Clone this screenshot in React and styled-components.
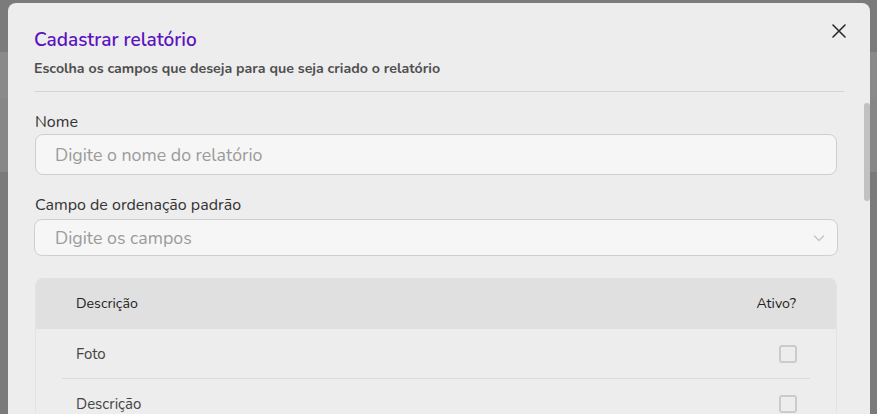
import React from "react";
import styled, { createGlobalStyle } from "styled-components";

const GlobalStyle = createGlobalStyle`
  html, body {
    margin: 0;
    padding: 0;
    overflow: hidden;
    font-family: "Nunito", "Open Sans", sans-serif;
  }
`;

const Page = styled.div`
  position: relative;
  width: 877px;
  height: 414px;
  overflow: hidden;
  display: flex;
  flex-direction: column;
`;

const Band = styled.div`
  height: ${(p) => p.$h}px;
  flex: ${(p) => (p.$grow ? 1 : "none")};
  background: ${(p) => p.$bg};
`;

const Modal = styled.div`
  position: absolute;
  top: 3px;
  left: 8px;
  width: 862px;
  height: 430px;
  background: #ededed;
  border-radius: 8px;
  display: flex;
  flex-direction: column;
`;

const Header = styled.div`
  position: relative;
  margin: 0 26px;
  padding: 24px 0 13px;
  border-bottom: 1px solid #d5d5d5;
`;

const Title = styled.h2`
  margin: 0;
  font-size: 19px;
  line-height: 26px;
  font-weight: 600;
  color: #5c12c0;
`;

const Subtitle = styled.p`
  margin: 7px 0 0;
  font-size: 14.2px;
  line-height: 18px;
  font-weight: 700;
  color: #4f4f4f;
`;

const Close = styled.button`
  position: absolute;
  top: 17px;
  right: -6px;
  width: 22px;
  height: 22px;
  padding: 0;
  border: 0;
  background: transparent;
  display: flex;
  align-items: center;
  justify-content: center;
  cursor: pointer;
`;

const BodyWrap = styled.div`
  position: relative;
  flex: 1;
  overflow: hidden;
`;

const ScrollThumb = styled.div`
  position: absolute;
  top: 11px;
  right: 0;
  width: 6px;
  height: 98px;
  border-radius: 3px;
  background: #c1c1c1;
`;

const Body = styled.div`
  padding: 19px 33px 0 26px;
`;

const Field = styled.div`
  display: flex;
  flex-direction: column;
  gap: ${(p) => p.$gap}px;
  margin-bottom: ${(p) => p.$mb}px;
`;

const Label = styled.label`
  padding-left: 1px;
  font-size: 16px;
  line-height: 22px;
  color: #333;
`;

const Input = styled.input`
  box-sizing: border-box;
  height: 41px;
  margin-left: 1px;
  padding: 0 19px;
  border: 1px solid #cfcfcf;
  border-radius: 8px;
  background: #f6f6f6;
  font-family: inherit;
  font-size: 17.8px;
  color: #333;
  outline: none;

  &::placeholder {
    color: #9b9b9b;
  }
`;

const SelectBox = styled.div`
  box-sizing: border-box;
  height: 37px;
  margin-right: -1px;
  padding: 0 12px 0 20px;
  border: 1px solid #cfcfcf;
  border-radius: 8px;
  background: #f6f6f6;
  display: flex;
  align-items: center;
  justify-content: space-between;
  font-size: 17.8px;
  color: #9b9b9b;
`;

const Table = styled.div`
  margin-left: 1px;
  border: 1px solid #e3e3e3;
  border-top: 0;
  border-radius: 8px 8px 0 0;
  overflow: hidden;
`;

const HeadRow = styled.div`
  height: 51px;
  background: #e0e0e0;
  display: flex;
  align-items: center;
  justify-content: space-between;
  padding: 0 40px 0 40px;
  font-size: 14.2px;
  color: #222;
`;

const Row = styled.div`
  box-sizing: border-box;
  height: 50px;
  margin: 0 26px;
  padding: 0 13px 0 14px;
  display: flex;
  align-items: center;
  justify-content: space-between;
  border-bottom: 1px solid #dcdcdc;
  font-size: 15px;
  color: #444;
`;

const Check = styled.span`
  box-sizing: border-box;
  width: 18px;
  height: 18px;
  border: 2px solid #cbcbcb;
  border-radius: 3px;
`;

const rows = ["Foto", "Descrição", "Código", "Categoria", "Preço", "Estoque"];

export default function App() {
  return (
    <Page>
      <GlobalStyle />
      <Band $h={52} $bg="#7b7b7b" />
      <Band $h={47} $bg="#8a8a8a" />
      <Band $h={73} $bg="#878787" />
      <Band $grow $bg="#7b7b7b" />
      <Modal>
        <Header>
          <Title>Cadastrar relatório</Title>
          <Subtitle>Escolha os campos que deseja para que seja criado o relatório</Subtitle>
          <Close aria-label="Fechar">
            <svg width="14" height="14" viewBox="0 0 14 14">
              <path d="M1 1 L13 13 M13 1 L1 13" stroke="#2b2b2b" strokeWidth="1.6" strokeLinecap="round" />
            </svg>
          </Close>
        </Header>
        <BodyWrap>
          <Body>
            <Field $gap={1} $mb={19}>
              <Label>Nome</Label>
              <Input placeholder="Digite o nome do relatório" />
            </Field>
            <Field $gap={3} $mb={22}>
              <Label>Campo de ordenação padrão</Label>
              <SelectBox>
                <span>Digite os campos</span>
                <svg width="12" height="8" viewBox="0 0 12 8">
                  <path d="M1 1.5 L6 6.5 L11 1.5" fill="none" stroke="#c4c4c4" strokeWidth="1.3" />
                </svg>
              </SelectBox>
            </Field>
            <Table>
              <HeadRow>
                <span>Descrição</span>
                <span>Ativo?</span>
              </HeadRow>
              {rows.map((r) => (
                <Row key={r}>
                  <span>{r}</span>
                  <Check />
                </Row>
              ))}
            </Table>
          </Body>
          <ScrollThumb />
        </BodyWrap>
      </Modal>
    </Page>
  );
}
